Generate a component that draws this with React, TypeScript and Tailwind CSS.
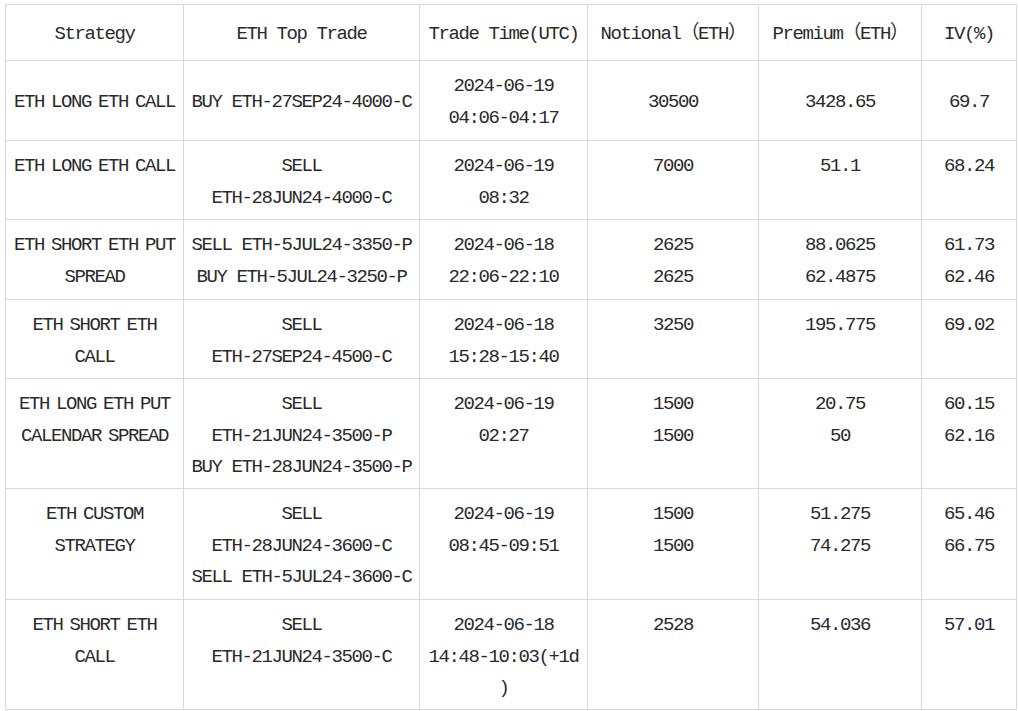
import React from "react";

type Row = {
  cells: string[][];
  h: string;
  middle?: boolean;
};

const rows: Row[] = [
  {
    h: "h-[80px]",
    middle: true,
    cells: [
      ["ETH LONG ETH CALL"],
      ["BUY ETH-27SEP24-4000-C"],
      ["2024-06-19", "04:06-04:17"],
      ["30500"],
      ["3428.65"],
      ["69.7"],
    ],
  },
  {
    h: "h-[79px]",
    cells: [
      ["ETH LONG ETH CALL"],
      ["SELL", "ETH-28JUN24-4000-C"],
      ["2024-06-19", "08:32"],
      ["7000"],
      ["51.1"],
      ["68.24"],
    ],
  },
  {
    h: "h-[80px]",
    cells: [
      ["ETH SHORT ETH PUT", "SPREAD"],
      ["SELL ETH-5JUL24-3350-P", "BUY ETH-5JUL24-3250-P"],
      ["2024-06-18", "22:06-22:10"],
      ["2625", "2625"],
      ["88.0625", "62.4875"],
      ["61.73", "62.46"],
    ],
  },
  {
    h: "h-[79px]",
    cells: [
      ["ETH SHORT ETH", "CALL"],
      ["SELL", "ETH-27SEP24-4500-C"],
      ["2024-06-18", "15:28-15:40"],
      ["3250"],
      ["195.775"],
      ["69.02"],
    ],
  },
  {
    h: "h-[110px]",
    cells: [
      ["ETH LONG ETH PUT", "CALENDAR SPREAD"],
      ["SELL", "ETH-21JUN24-3500-P", "BUY ETH-28JUN24-3500-P"],
      ["2024-06-19", "02:27"],
      ["1500", "1500"],
      ["20.75", "50"],
      ["60.15", "62.16"],
    ],
  },
  {
    h: "h-[111px]",
    cells: [
      ["ETH CUSTOM", "STRATEGY"],
      ["SELL", "ETH-28JUN24-3600-C", "SELL ETH-5JUL24-3600-C"],
      ["2024-06-19", "08:45-09:51"],
      ["1500", "1500"],
      ["51.275", "74.275"],
      ["65.46", "66.75"],
    ],
  },
  {
    h: "h-[110px]",
    cells: [
      ["ETH SHORT ETH", "CALL"],
      ["SELL", "ETH-21JUN24-3500-C"],
      ["2024-06-18", "14:48-10:03(+1d", ")"],
      ["2528"],
      ["54.036"],
      ["57.01"],
    ],
  },
];

const headers = [
  "Strategy",
  "ETH Top Trade",
  "Trade Time(UTC)",
  "Notional（ETH）",
  "Premium（ETH）",
  "IV(%)",
];

function Cell({
  lines,
  middle,
  tight,
}: {
  lines: string[];
  middle?: boolean;
  tight?: boolean;
}) {
  return (
    <div
      className={
        middle
          ? "flex flex-col items-center justify-center pt-[4px] border-r border-b border-[#d9d9d9]"
          : "flex flex-col items-center justify-start pt-[10px] border-r border-b border-[#d9d9d9]"
      }
    >
      {lines.map((l, i) => (
        <div
          key={i}
          className={
            tight
              ? "whitespace-pre leading-[31.5px] [word-spacing:-3px]"
              : "whitespace-pre leading-[31.5px]"
          }
        >
          {l}
        </div>
      ))}
    </div>
  );
}

export default function App() {
  return (
    <div className="w-[1018px] h-[711px] bg-white pl-[5px] pt-[4px] overflow-hidden">
      <div className="w-[1012px] border-l border-t border-[#d9d9d9] font-['Liberation_Mono','Noto_Sans_CJK_SC',monospace] text-[19px] tracking-[-1.4px] text-[#2a2a2a]">
        <div className="grid grid-cols-[178px_236px_168px_171px_163px_95px] h-[56px]">
          {headers.map((h, i) => (
            <Cell key={i} lines={[h]} middle />
          ))}
        </div>
        {rows.map((r, ri) => (
          <div
            key={ri}
            className={`grid grid-cols-[178px_236px_168px_171px_163px_95px] ${r.h}`}
          >
            {r.cells.map((c, ci) => (
              <Cell key={ci} lines={c} middle={r.middle} tight={ci === 0} />
            ))}
          </div>
        ))}
      </div>
    </div>
  );
}
